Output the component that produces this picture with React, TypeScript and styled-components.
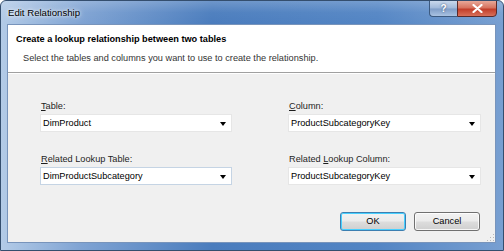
import styled, { createGlobalStyle } from 'styled-components';

const GlobalStyle = createGlobalStyle`
    html, body {
        margin: 0;
        padding: 0;
        width: 504px;
        height: 251px;
        overflow: hidden;
        background: #ffffff;
    }
    body {
        font-family: "Liberation Sans", Arial, sans-serif;
        font-size: 9.2px;
        color: #000000;
    }
`;

interface FieldProps {
    label: string;
    mnemonic: number;
    value: string;
    focused?: boolean;
}

const Field = ({ label, mnemonic, value, focused }: FieldProps) => (
    <FieldBox>
        <Label>
            {label.slice(0, mnemonic)}
            <u>{label[mnemonic]}</u>
            {label.slice(mnemonic + 1)}
        </Label>
        <Combo focused={focused}>
            <ComboText>{value}</ComboText>
            <Arrow />
        </Combo>
    </FieldBox>
);

export default function App() {
    return (
        <>
            <GlobalStyle />
            <Window>
                <TitleBar>
                    <Title>Edit Relationship</Title>
                    <CaptionButtons>
                        <HelpButton>?</HelpButton>
                        <CloseButton>
                            <svg width="11" height="9" viewBox="0 0 11 9">
                                <path d="M1.5 1 L9.5 8 M9.5 1 L1.5 8" stroke="#ffffff" strokeWidth="2.2" strokeLinecap="round" />
                            </svg>
                        </CloseButton>
                    </CaptionButtons>
                </TitleBar>
                <Client>
                    <Header>
                        <HeaderTitle>Create a lookup relationship between two tables</HeaderTitle>
                        <HeaderText>Select the tables and columns you want to use to create the relationship.</HeaderText>
                    </Header>
                    <Body>
                        <FieldGrid>
                            <Field label="Table:" mnemonic={0} value="DimProduct" />
                            <Field label="Column:" mnemonic={0} value="ProductSubcategoryKey" />
                            <Field label="Related Lookup Table:" mnemonic={0} value="DimProductSubcategory" focused />
                            <Field label="Related Lookup Column:" mnemonic={8} value="ProductSubcategoryKey" />
                        </FieldGrid>
                        <ButtonRow>
                            <DialogButton isDefault>OK</DialogButton>
                            <DialogButton>Cancel</DialogButton>
                        </ButtonRow>
                        <Grip />
                    </Body>
                </Client>
            </Window>
        </>
    );
}

const Window = styled.div`
    width: 504px;
    height: 251px;
    box-sizing: border-box;
    display: flex;
    flex-direction: column;
    border: 1px solid #344e6e;
    border-radius: 6px 6px 0 0;
    background: linear-gradient(90deg, #b3cbe7 0%, #7fa3d3 16%, #4a7cbd 42%, #5385c4 75%, #789fd1 100%);
    overflow: hidden;
`;

const TitleBar = styled.div`
    height: 23px;
    flex: none;
    display: flex;
    align-items: flex-start;
    justify-content: space-between;
    padding-left: 7px;
    padding-right: 6px;
    background: linear-gradient(180deg, rgba(255, 255, 255, 0.2) 0%, rgba(255, 255, 255, 0.04) 50%, rgba(0, 0, 0, 0) 100%);
`;

const Title = styled.div`
    font-size: 9.6px;
    line-height: 24px;
    color: #000000;
    text-shadow: 0 0 6px rgba(255, 255, 255, 0.9), 0 0 3px rgba(255, 255, 255, 0.9);
`;

const CaptionButtons = styled.div`
    display: flex;
    margin-top: -1px;
`;

const HelpButton = styled.div`
    width: 28px;
    height: 17px;
    box-sizing: border-box;
    border: 1px solid #3c5a80;
    border-right: none;
    border-radius: 0 0 0 4px;
    background: linear-gradient(180deg, #c9d8ec 0%, #9fb8d9 48%, #7f9dc7 52%, #a9c2e2 100%);
    color: #ffffff;
    font-weight: bold;
    font-size: 10px;
    line-height: 16px;
    text-align: center;
    text-shadow: 0 0 2px #2c4466;
`;

const CloseButton = styled.div`
    width: 40px;
    height: 17px;
    box-sizing: border-box;
    border: 1px solid #5a2a2a;
    border-radius: 0 0 4px 0;
    background: linear-gradient(180deg, #e8a898 0%, #d6735f 45%, #c23e2a 55%, #d8705a 100%);
    display: flex;
    align-items: center;
    justify-content: center;
`;

const Client = styled.div`
    flex: 1;
    margin: 0 7px 7px 6px;
    border: 1px solid #7894bb;
    display: flex;
    flex-direction: column;
    background: #f0f0f0;
`;

const Header = styled.div`
    height: 48px;
    flex: none;
    background: #ffffff;
    border-bottom: 1px solid #a0a0a0;
    box-shadow: 0 1px 0 #ffffff;
    padding: 8px 0 0 8px;
    box-sizing: border-box;
`;

const HeaderTitle = styled.div`
    font-weight: bold;
    line-height: 13px;
`;

const HeaderText = styled.div`
    margin-top: 6px;
    padding-left: 7px;
    color: #333333;
    line-height: 13px;
`;

const Body = styled.div`
    flex: 1;
    position: relative;
    display: flex;
    flex-direction: column;
    padding: 27px 14px 0 32px;
`;

const FieldGrid = styled.div`
    display: grid;
    grid-template-columns: 192px 193px;
    column-gap: 56px;
    row-gap: 21px;
`;

const FieldBox = styled.div`
    display: flex;
    flex-direction: column;
    gap: 2px;
`;

const Label = styled.div`
    line-height: 12px;
    color: #1e1e1e;
    padding-left: 1px;
`;

const Combo = styled.div<{ focused?: boolean }>`
    height: 18px;
    box-sizing: border-box;
    display: flex;
    align-items: center;
    background: #ffffff;
    border: 1px solid ${props => props.focused ? '#c5d4e4' : '#e6e6e6'};
    padding: 0 5px 0 2px;
`;

const ComboText = styled.div`
    flex: 1;
    white-space: nowrap;
    overflow: hidden;
    color: #000000;
`;

const Arrow = styled.div`
    width: 0;
    height: 0;
    border-left: 3.5px solid transparent;
    border-right: 3.5px solid transparent;
    border-top: 4px solid #000000;
    margin-top: 1px;
`;

const ButtonRow = styled.div`
    display: flex;
    justify-content: flex-end;
    gap: 8px;
    margin-top: 27px;
    padding-right: 1px;
`;

const DialogButton = styled.div<{ isDefault?: boolean }>`
    width: 66px;
    height: 19px;
    box-sizing: border-box;
    border: 1px solid ${props => props.isDefault ? '#3c7fb1' : '#707070'};
    border-radius: 3px;
    background: linear-gradient(180deg, #f2f2f2 0%, #ebebeb 48%, #dddddd 52%, #cfcfcf 100%);
    box-shadow: inset 0 0 0 1px ${props => props.isDefault ? '#48d0ff' : 'rgba(255, 255, 255, 0.8)'};
    text-align: center;
    line-height: 17px;
    color: #000000;
`;

const Grip = styled.div`
    position: absolute;
    right: 1px;
    bottom: 1px;
    width: 8px;
    height: 8px;
    background-image: radial-gradient(circle, #b8b8b8 0.8px, transparent 1px);
    background-size: 3px 3px;
    clip-path: polygon(100% 0, 100% 100%, 0 100%);
`;
